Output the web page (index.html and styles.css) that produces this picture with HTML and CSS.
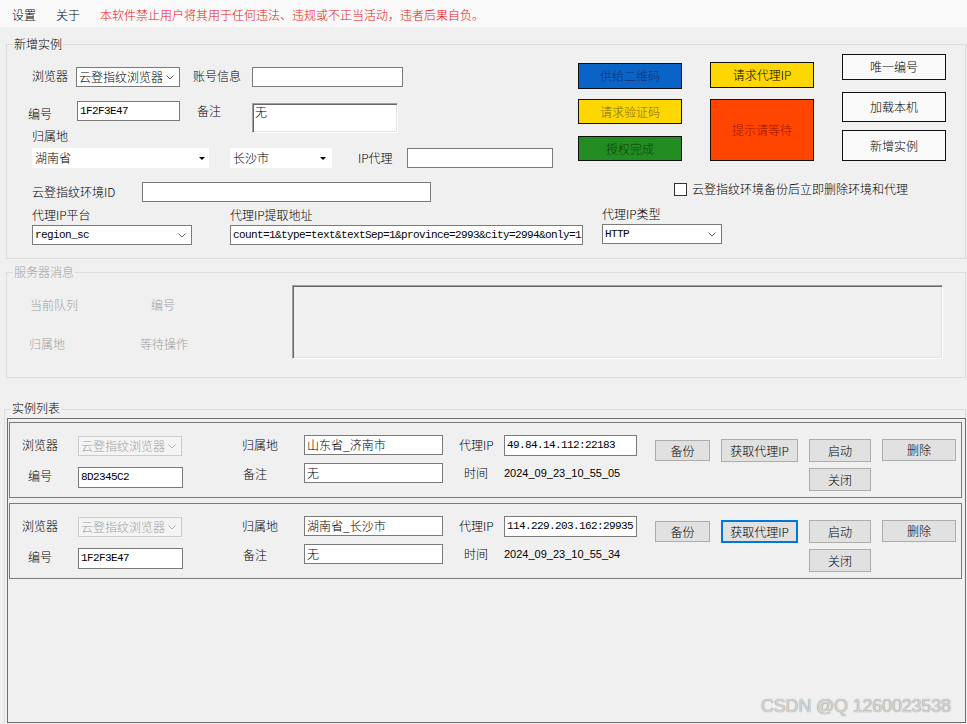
FILE: index.html
```html
<!DOCTYPE html>
<html lang="zh-CN">
<head>
<meta charset="utf-8">
<title>云登指纹</title>
<link rel="stylesheet" href="styles.css">
</head>
<body>
<nav class="menubar">
  <span>设置</span>
  <span>关于</span>
  <span class="warn">本软件禁止用户将其用于任何违法、违规或不正当活动，违者后果自负。</span>
</nav>

<section class="group g-new">
  <span class="legend">新增实例</span>
  <div class="new-top">
    <div class="fields">
      <div class="row r-a">
        <span class="lbl l-browser">浏览器</span>
        <div class="select s-browser"><span class="val">云登指纹浏览器</span><svg class="chev" width="8" height="5" viewBox="0 0 8 5"><polyline points="0.5,0.5 4,4 7.5,0.5"/></svg></div>
        <span class="lbl l-acct">账号信息</span>
        <div class="input i-acct"></div>
      </div>
      <div class="row r-b">
        <div class="col-b">
          <div class="row">
            <span class="lbl l-no">编号</span>
            <div class="input i-no mono">1F2F3E47</div>
          </div>
          <span class="lbl l-region">归属地</span>
        </div>
        <span class="lbl l-note">备注</span>
        <div class="memo">无</div>
      </div>
      <div class="row r-d">
        <div class="combo c-prov"><span>湖南省</span><i class="tri"></i></div>
        <div class="combo c-city"><span>长沙市</span><i class="tri"></i></div>
        <span class="lbl l-ipproxy">IP代理</span>
        <div class="input i-ipproxy"></div>
      </div>
    </div>
    <div class="btncol bc-1">
      <div class="cbtn blue h26">供给二维码</div>
      <div class="cbtn yellow dim h25 mt10">请求验证码</div>
      <div class="cbtn green h25 mt12">授权完成</div>
    </div>
    <div class="btncol bc-2">
      <div class="cbtn yellow h26">请求代理IP</div>
      <div class="cbtn orange h62 mt11">提示请等待</div>
    </div>
    <div class="btncol bc-3">
      <div class="cbtn plain h26">唯一编号</div>
      <div class="cbtn plain h30 mt12">加载本机</div>
      <div class="cbtn plain h31 mt8">新增实例</div>
    </div>
  </div>
  <div class="row r-e">
    <span class="lbl l-envid">云登指纹环境ID</span>
    <div class="input i-envid"></div>
    <span class="check"></span>
    <span class="lbl l-check">云登指纹环境备份后立即删除环境和代理</span>
  </div>
  <div class="row r-f">
    <div class="fcol f-plat">
      <span class="lbl">代理IP平台</span>
      <div class="select"><span class="val mono">region_sc</span><svg class="chev" width="8" height="5" viewBox="0 0 8 5"><polyline points="0.5,0.5 4,4 7.5,0.5"/></svg></div>
    </div>
    <div class="fcol f-addr">
      <span class="lbl">代理IP提取地址</span>
      <div class="input mono">count=1&amp;type=text&amp;textSep=1&amp;province=2993&amp;city=2994&amp;only=1</div>
    </div>
    <div class="fcol f-type">
      <span class="lbl">代理IP类型</span>
      <div class="select"><span class="val mono">HTTP</span><svg class="chev" width="8" height="5" viewBox="0 0 8 5"><polyline points="0.5,0.5 4,4 7.5,0.5"/></svg></div>
    </div>
  </div>
</section>

<section class="group g-srv">
  <span class="legend dis">服务器消息</span>
  <div class="srv-labels">
    <div class="row"><span class="dis l-q">当前队列</span><span class="dis l-sno">编号</span></div>
    <div class="row r-srv2"><span class="dis l-sreg">归属地</span><span class="dis l-wait">等待操作</span></div>
  </div>
  <div class="srv-box"></div>
</section>

<section class="group g-list">
  <span class="legend">实例列表</span>
  <div class="panel">
    <div class="inst">
      <span class="lbl il-browser">浏览器</span>
      <div class="select dsel"><span class="val">云登指纹浏览器</span><svg class="chev" width="8" height="5" viewBox="0 0 8 5"><polyline points="0.5,0.5 4,4 7.5,0.5"/></svg></div>
      <span class="lbl il-region">归属地</span>
      <div class="input ii-region">山东省_济南市</div>
      <span class="lbl il-ip">代理IP</span>
      <div class="input ii-ip mono">49.84.14.112:22183</div>
      <div class="btn b-backup">备份</div>
      <div class="btn b-fetch">获取代理IP</div>
      <div class="btn b-start">启动</div>
      <div class="btn b-del">删除</div>
      <span class="lbl il-no">编号</span>
      <div class="input ii-no mono">8D2345C2</div>
      <span class="lbl il-note">备注</span>
      <div class="input ii-note">无</div>
      <span class="lbl il-time">时间</span>
      <span class="time">2024_09_23_10_55_05</span>
      <div class="btn b-close">关闭</div>
    </div>
    <div class="inst">
      <span class="lbl il-browser">浏览器</span>
      <div class="select dsel"><span class="val">云登指纹浏览器</span><svg class="chev" width="8" height="5" viewBox="0 0 8 5"><polyline points="0.5,0.5 4,4 7.5,0.5"/></svg></div>
      <span class="lbl il-region">归属地</span>
      <div class="input ii-region">湖南省_长沙市</div>
      <span class="lbl il-ip">代理IP</span>
      <div class="input ii-ip mono">114.229.203.162:29935</div>
      <div class="btn b-backup">备份</div>
      <div class="btn b-fetch focus">获取代理IP</div>
      <div class="btn b-start">启动</div>
      <div class="btn b-del">删除</div>
      <span class="lbl il-no">编号</span>
      <div class="input ii-no mono">1F2F3E47</div>
      <span class="lbl il-note">备注</span>
      <div class="input ii-note">无</div>
      <span class="lbl il-time">时间</span>
      <span class="time">2024_09_23_10_55_34</span>
      <div class="btn b-close">关闭</div>
    </div>
  </div>
</section>

<div class="watermark">CSDN @Q 1260023538</div>
</body>
</html>
```

FILE: styles.css
```css
* { box-sizing: border-box; }
html, body { margin: 0; padding: 0; height: 724px; overflow: hidden; }
body {
  position: relative;
  background: #f0f0f0;
  font-family: "Noto Sans CJK SC", "Noto Sans", sans-serif;
  font-size: 12px;
  font-weight: 300;
  line-height: 14px;
  color: #000;
}

/* menu */
.menubar {
  display: flex;
  gap: 20px;
  align-items: center;
  height: 27px;
  padding: 3px 0 0 12px;
  background: #f9f9f9;
}
.warn { color: #f01010; }

/* generic */
.row { display: flex; align-items: flex-start; }
.lbl { display: block; white-space: nowrap; }
.dis { color: #a0a0a0; }
.group { position: relative; border: 1px solid #dcdcdc; }
.legend {
  position: absolute;
  left: 6px;
  top: -8px;
  padding: 0 1px;
  background: #f0f0f0;
  white-space: nowrap;
}
.input {
  height: 20px;
  border: 1px solid #7a7a7a;
  background: #fff;
  padding-left: 2px;
  line-height: 18px;
  white-space: nowrap;
  overflow: hidden;
}
.mono {
  font-family: "Liberation Mono", monospace;
  font-size: 11px;
  font-weight: 400;
  letter-spacing: -0.6px;
}
.select {
  display: flex;
  align-items: center;
  justify-content: space-between;
  height: 20px;
  border: 1px solid #7a7a7a;
  background: #fff;
  padding: 0 5px 0 2px;
  line-height: 18px;
  white-space: nowrap;
}
.chev { flex: none; fill: none; stroke: #606060; stroke-width: 1; }

/* group 1 */
.g-new { margin: 17px 1px 0 6px; height: 215px; }
.new-top { display: flex; height: 122px; }
.fields { width: 571px; flex: none; padding-top: 21px; }
.r-a { height: 21px; }
.l-browser { margin-left: 25px; width: 44px; line-height: 20px; }
.s-browser { width: 104px; margin-top: 1px; }
.l-acct { margin-left: 13px; width: 59px; line-height: 20px; }
.i-acct { width: 151px; margin-top: 1px; }
.r-b { margin-top: 14px; }
.col-b { width: 190px; }
.l-no { margin: 6px 0 0 21px; width: 49px; }
.i-no { width: 103px; }
.l-region { margin: 8px 0 0 25px; }
.l-note { width: 55px; margin-top: 3px; }
.memo {
  width: 146px;
  height: 30px;
  margin-top: 2px;
  padding: 1px 2px;
  background: #fff;
  border-top: 1px solid #a0a0a0;
  border-left: 1px solid #a0a0a0;
  border-right: 1px solid #fff;
  border-bottom: 1px solid #fff;
  box-shadow: inset 1px 1px 0 #696969, inset -1px -1px 0 #e3e3e3;
}
.r-d { margin-top: 5px; }
.combo {
  display: flex;
  align-items: center;
  justify-content: space-between;
  height: 20px;
  background: #fff;
  padding: 0 4px 0 3px;
  line-height: 20px;
}
.c-prov { width: 177px; margin-left: 25px; }
.c-city { width: 102px; margin-left: 21px; padding-right: 6px; }
.tri {
  width: 0;
  height: 0;
  border-left: 3px solid transparent;
  border-right: 3px solid transparent;
  border-top: 3px solid #000;
}
.l-ipproxy { margin-left: 26px; width: 49px; line-height: 20px; }
.i-ipproxy { width: 146px; }

.btncol { display: flex; flex-direction: column; width: 104px; flex: none; }
.bc-1 { margin-top: 18px; }
.bc-2 { margin: 17px 0 0 28px; }
.bc-3 { margin: 9px 0 0 28px; }
.cbtn {
  display: flex;
  align-items: center;
  justify-content: center;
  border: 1px solid #111;
  white-space: nowrap;
}
.h25 { height: 25px; }
.h26 { height: 26px; }
.h30 { height: 30px; }
.h31 { height: 31px; }
.h62 { height: 62px; }
.mt8 { margin-top: 8px; }
.mt10 { margin-top: 10px; }
.mt11 { margin-top: 11px; }
.mt12 { margin-top: 12px; }
.blue { background: #0a64c8; color: #132f70; }
.yellow { background: #ffd700; }
.dim { color: #7d6612; }
.green { background: #228b22; color: #0c430c; }
.orange { background: #ff4500; color: #9c1200; }
.plain { background: #f9f9f9; }

.r-e { margin-top: 15px; height: 20px; }
.l-envid { margin-left: 25px; width: 110px; line-height: 20px; }
.i-envid { width: 289px; }
.check {
  width: 13px;
  height: 13px;
  border: 1px solid #333;
  background: #fff;
  margin: 1px 0 0 243px;
}
.l-check { margin-left: 5px; }

.fcol { display: flex; flex-direction: column; }
.fcol .lbl { margin-top: 6px; }
.fcol .select, .fcol .input { margin-top: 3px; }
.f-plat { margin-left: 25px; width: 160px; }
.f-addr { margin-left: 38px; width: 353px; }
.f-type { margin-left: 19px; width: 120px; margin-top: -1px; }

/* group 2 */
.g-srv { margin: 13px 1px 0 6px; height: 106px; display: flex; }
.srv-labels { width: 285px; flex: none; padding-top: 25px; }
.l-q { margin-left: 23px; }
.l-sno { margin-left: 73px; }
.r-srv2 { margin-top: 25px; }
.l-sreg { margin-left: 22px; }
.l-wait { margin-left: 75px; }
.srv-box {
  width: 651px;
  height: 74px;
  margin-top: 12px;
  border-top: 1px solid #a0a0a0;
  border-left: 1px solid #a0a0a0;
  border-right: 1px solid #fff;
  border-bottom: 1px solid #fff;
  box-shadow: inset 1px 1px 0 #696969, inset -1px -1px 0 #e3e3e3;
}

/* group 3 */
.g-list { margin: 31px 1px 0 4px; height: 320px; }
.g-list .legend { top: -9px; }
.panel {
  margin: 8px 0 0 2px;
  width: 959px;
  height: 305px;
  border: 1px solid #6e6e6e;
}
.inst {
  display: grid;
  grid-template-columns: 68px 105px 121px 139px 61px 133px 73px 88px 73px 85px;
  grid-template-rows: 28px 28px;
  margin: 3px 0 0 1px;
  width: 953px;
  height: 76px;
  padding-top: 12px;
  border: 1px solid #7a7a7a;
}
.inst + .inst { margin-top: 5px; }
.inst > * { align-self: start; }
.il-browser { padding-left: 12px; line-height: 20px; }
.dsel {
  width: 104px;
  margin-top: 1px;
  border-color: #cccccc;
  background: #f4f4f4;
  color: #a0a0a0;
}
.dsel .chev { stroke: #b0b0b0; }
.il-region { padding-left: 59px; line-height: 20px; }
.ii-region { width: 139px; }
.il-ip { padding-left: 16px; line-height: 20px; }
.ii-ip { width: 133px; height: 21px; }
.btn {
  display: flex;
  align-items: center;
  justify-content: center;
  justify-self: end;
  background: #e1e1e1;
  border: 1px solid #adadad;
  white-space: nowrap;
}
.b-backup { width: 55px; height: 21px; margin-top: 5px; }
.b-fetch { width: 77px; height: 23px; margin-top: 4px; }
.b-start { width: 62px; height: 23px; margin-top: 4px; }
.b-del { width: 74px; height: 22px; margin-top: 4px; }
.focus { border: 2px solid #0078d7; }
.il-no { padding-left: 18px; line-height: 20px; margin-top: 3px; }
.ii-no { width: 105px; height: 21px; margin-top: 4px; }
.il-note { padding-left: 60px; line-height: 20px; margin-top: 1px; }
.ii-note { width: 139px; }
.il-time { padding-left: 21px; line-height: 20px; }
.time {
  font-family: "Liberation Sans", sans-serif;
  font-size: 11px;
  font-weight: 400;
  line-height: 20px;
  white-space: nowrap;
}
.b-close { grid-column: 9; width: 62px; height: 23px; margin-top: 5px; }

.watermark {
  position: absolute;
  left: 761px;
  top: 696px;
  font-family: "Liberation Sans", sans-serif;
  font-size: 18px;
  font-weight: 400;
  line-height: 20px;
  letter-spacing: -0.2px;
  color: #d6d6d6;
  text-shadow: 0 0 1px #707070;
  white-space: nowrap;
}
```
